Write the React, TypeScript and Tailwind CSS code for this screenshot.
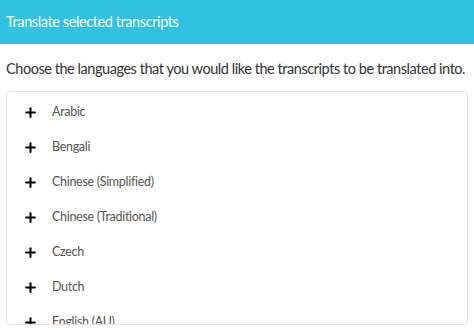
import { Plus } from 'lucide-react';

const languages = [
  'Arabic',
  'Bengali',
  'Chinese (Simplified)',
  'Chinese (Traditional)',
  'Czech',
  'Dutch',
  'English (AU)',
  'English (UK)',
  'English (US)',
  'French',
];

export default function App() {
  return (
    <div className="w-[474px] h-[334px] overflow-hidden bg-white" style={{ fontFamily: 'Lato, "Noto Sans", sans-serif' }}>
      <div className="h-[44px] bg-[#31c1e1] flex items-center px-[6px] text-white text-[14.5px] tracking-[-0.4px]">
        Translate selected transcripts
      </div>
      <p className="px-[6px] pt-[14px] text-[14.5px] leading-[22px] tracking-[-0.45px] text-[#333] whitespace-nowrap">
        Choose the languages that you would like the transcripts to be translated into.
      </p>
      <div className="mx-[6px] mt-[11px] h-[234px] overflow-hidden rounded-[4px] border border-[#e4e4e4] shadow-[0_0_2px_rgba(0,0,0,0.06)]">
        <ul className="pt-[3px]">
          {languages.map((lang) => (
            <li key={lang} className="h-[35px] flex items-center pl-[16px]">
              <Plus className="w-[15px] h-[15px] text-black" strokeWidth={3.2} />
              <span className="ml-[14px] text-[12.5px] tracking-[-0.3px] text-[#555]">{lang}</span>
            </li>
          ))}
        </ul>
      </div>
    </div>
  );
}
